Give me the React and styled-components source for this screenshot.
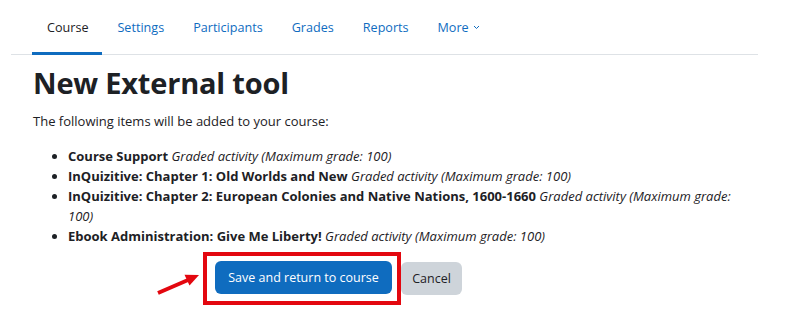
import React from "react";
import styled, { createGlobalStyle } from "styled-components";

const GlobalStyle = createGlobalStyle`
  body {
    margin: 0;
    background: #fff;
    font-family: "Open Sans", "Liberation Sans", sans-serif;
    color: #1d2125;
  }
`;

const Page = styled.div`
  width: 803px;
  height: 322px;
  overflow: hidden;
  padding: 0 0 0 11px;
  box-sizing: border-box;
`;

const Tabs = styled.nav`
  display: flex;
  width: 747px;
  height: 55px;
  padding-left: 21px;
  box-sizing: border-box;
  border-bottom: 1px solid #dee2e6;
`;

const Tab = styled.a`
  display: flex;
  align-items: center;
  gap: 4px;
  height: 55px;
  padding: 3px 14px 0 15px;
  box-sizing: border-box;
  font-size: 12.6px;
  color: ${(p) => (p.active ? "#1d2125" : "#0f6cbf")};
  border-bottom: 3px solid ${(p) => (p.active ? "#0f6cbf" : "transparent")};
  margin-bottom: -1px;
  text-decoration: none;
`;

const Content = styled.div`
  padding: 8px 0 0 22px;
`;

const Title = styled.h2`
  margin: 0;
  font-size: 29px;
  font-weight: 700;
  line-height: 40px;
  letter-spacing: -0.2px;
`;

const Intro = styled.p`
  margin: 8px 0 0;
  font-size: 13px;
  line-height: 20px;
`;

const Items = styled.ul`
  margin: 15px 0 0;
  padding-left: 35px;
  width: 690px;
  font-size: 13px;
  line-height: 20px;
`;

const Item = styled.li`
  margin: 0;
`;

const Name = styled.b`
  font-weight: 700;
`;

const Note = styled.i`
  font-style: italic;
`;

const Actions = styled.div`
  position: relative;
  display: flex;
  align-items: center;
  margin: 6px 0 0 170px;
`;

const Highlight = styled.div`
  display: flex;
  padding: 5px 5px 7px 8px;
  border: 4px solid #e3070f;
`;

const Button = styled.button`
  height: 33px;
  padding: 0;
  border: 0;
  border-radius: 6px;
  font-family: inherit;
  font-size: 12.5px;
  white-space: nowrap;
  background: ${(p) => (p.primary ? "#0f6cbf" : "#ced4da")};
  color: ${(p) => (p.primary ? "#fff" : "#1d2125")};
  width: ${(p) => p.w}px;
`;

const Pointer = styled.svg`
  position: absolute;
  left: -50px;
  top: 19px;
`;

const items = [
  ["Course Support", "Graded activity (Maximum grade: 100)"],
  ["InQuizitive: Chapter 1: Old Worlds and New", "Graded activity (Maximum grade: 100)"],
  [
    "InQuizitive: Chapter 2: European Colonies and Native Nations, 1600-1660",
    "Graded activity (Maximum grade: 100)",
  ],
  ["Ebook Administration: Give Me Liberty!", "Graded activity (Maximum grade: 100)"],
];

export default function App() {
  return (
    <Page>
      <GlobalStyle />
      <Tabs>
        <Tab active>Course</Tab>
        <Tab>Settings</Tab>
        <Tab>Participants</Tab>
        <Tab>Grades</Tab>
        <Tab>Reports</Tab>
        <Tab>
          More
          <svg width="7" height="5" viewBox="0 0 7 5">
            <path d="M1 1l2.5 2.5L6 1" fill="none" stroke="#0f6cbf" strokeWidth="1" />
          </svg>
        </Tab>
      </Tabs>
      <Content>
        <Title>New External tool</Title>
        <Intro>The following items will be added to your course:</Intro>
        <Items>
          {items.map(([name, note]) => (
            <Item key={name}>
              <Name>{name}</Name> <Note>{note}</Note>
            </Item>
          ))}
        </Items>
        <Actions>
          <Pointer width="48" height="27" viewBox="0 0 48 27">
            <line x1="5" y1="22" x2="35" y2="9" stroke="#e3070f" strokeWidth="4" />
            <path d="M46 4L31.5 3.8L36.5 14.5Z" fill="#e3070f" />
          </Pointer>
          <Highlight>
            <Button primary w={177}>Save and return to course</Button>
          </Highlight>
          <Button w={61}>Cancel</Button>
        </Actions>
      </Content>
    </Page>
  );
}
